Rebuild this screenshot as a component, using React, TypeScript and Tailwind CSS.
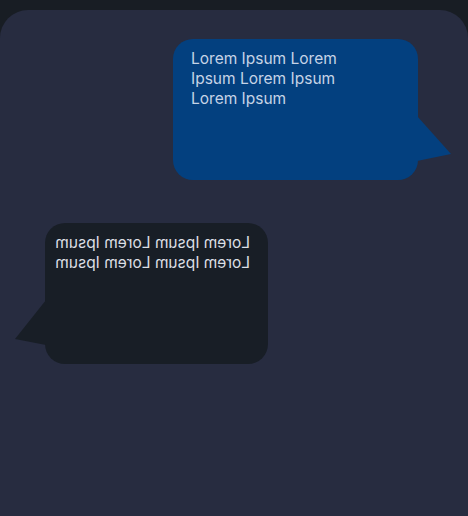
import React from "react";

function Bubble({
  width,
  bg,
  textClass,
  lines,
  mirrored,
}: {
  width: string;
  bg: string;
  textClass: string;
  lines: string[];
  mirrored?: boolean;
}) {
  return (
    <div className={`relative h-[141px] ${width} ${mirrored ? "-scale-x-100" : ""}`}>
      <div className={`h-full w-full rounded-[20px] ${bg} pl-[18px] pr-[10px] pt-[10px]`}>
        <div className={`${textClass} leading-[20px] whitespace-nowrap`} style={{ fontFamily: "Inter, 'Noto Sans', sans-serif" }}>
          {lines.map((l, i) => (
            <div key={i}>{l}</div>
          ))}
        </div>
      </div>
      {mirrored ? (
        <svg className="absolute left-[calc(100%-1px)] top-[77px]" width="32" height="46" viewBox="0 0 32 46">
          <polygon points="0,0 31,39 0,45" className="fill-[#181e26]" />
        </svg>
      ) : (
        <svg className="absolute left-[calc(100%-1px)] top-[77px]" width="35" height="46" viewBox="0 0 35 46">
          <polygon points="0,0 34,38 0,45" className="fill-[#03407f]" />
        </svg>
      )}
    </div>
  );
}

export default function App() {
  return (
    <div className="w-[468px] h-[516px] bg-[#181d24] pt-[10px] overflow-hidden">
      <div className="h-full w-full rounded-t-[28px] bg-[#272c40] flex flex-col pt-[29px]">
        <div className="self-end mr-[50px]">
          <Bubble
            width="w-[245px]"
            bg="bg-[#03407f]"
            textClass="text-[15.5px] text-[#c6d3e6]"
            lines={["Lorem Ipsum Lorem", "Ipsum Lorem Ipsum", "Lorem Ipsum"]}
          />
        </div>
        <div className="self-start ml-[45px] mt-[43px]">
          <Bubble
            width="w-[223px]"
            bg="bg-[#181e26]"
            textClass="text-[15.5px] text-[#dcdfe4]"
            lines={["Lorem Ipsum Lorem Ipsum", "Lorem Ipsum Lorem Ipsum"]}
            mirrored
          />
        </div>
      </div>
    </div>
  );
}
